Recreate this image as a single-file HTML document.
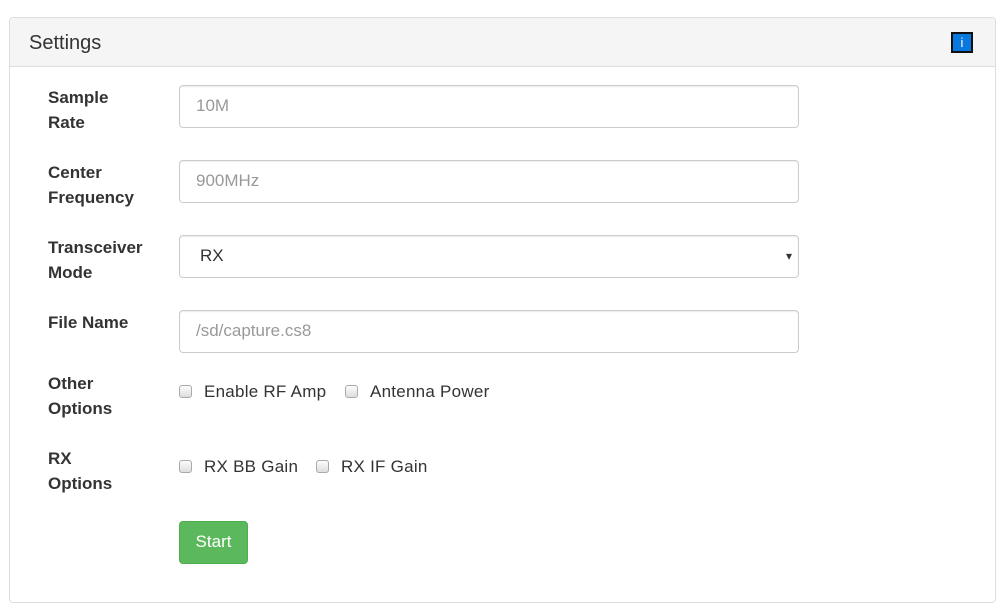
<!DOCTYPE html>
<html><head><meta charset="utf-8"><style>
*{box-sizing:border-box}
body{margin:0;width:1001px;height:615px;background:#fff;font-family:"Liberation Sans",Arial,sans-serif;color:#333;position:relative;overflow:hidden}
.panel{position:absolute;left:9px;top:17px;width:987px;height:586px;border:1px solid #ddd;border-radius:4px}
.head{height:49px;background:#f5f5f5;border-bottom:1px solid #ddd;border-radius:4px 4px 0 0;position:relative}
.head span{position:absolute;left:19px;top:14px;font-size:20px;color:#333}
.info{position:absolute;left:941px;top:14px;width:22px;height:21px;background:#0a79df;border:2px solid #111;color:#fff;font-size:13px;text-align:center;line-height:17px}
.lbl{position:absolute;left:48px;font-weight:bold;font-size:17px;line-height:25px;color:#333}
.in{position:absolute;left:179px;width:620px;height:43px;border:1px solid #ccc;border-radius:4px;font-size:17px;color:#999;padding:10px 0 0 16px;box-shadow:inset 0 1px 1px rgba(0,0,0,.075)}
.sel{color:#333;padding-left:20px}
.arr{position:absolute;right:6px;top:13px;font-size:12px;color:#333}
.cb{position:absolute;width:13px;height:13px;border:1px solid #aaa;border-radius:3px;background:linear-gradient(#fcfcfc,#ddd)}
.ct{position:absolute;font-size:17px;color:#333;letter-spacing:.25px}
.btn{position:absolute;left:179px;top:521px;width:69px;height:43px;background:#5cb85c;border:1px solid #4cae4c;border-radius:4px;color:#fff;font-size:17px;text-align:center;line-height:40px}
</style></head><body>
<div class="panel"><div class="head"><span>Settings</span><div class="info">i</div></div></div>
<div class="lbl" style="top:85px">Sample<br>Rate</div>
<div class="in" style="top:85px">10M</div>
<div class="lbl" style="top:160px">Center<br>Frequency</div>
<div class="in" style="top:160px">900MHz</div>
<div class="lbl" style="top:235px">Transceiver<br>Mode</div>
<div class="in sel" style="top:235px">RX<span class="arr">▾</span></div>
<div class="lbl" style="top:310px">File Name</div>
<div class="in" style="top:310px">/sd/capture.cs8</div>
<div class="lbl" style="top:371px">Other<br>Options</div>
<div class="cb" style="left:179px;top:385px"></div><div class="ct" style="left:204px;top:382px">Enable RF Amp</div>
<div class="cb" style="left:345px;top:385px"></div><div class="ct" style="left:370px;top:382px">Antenna Power</div>
<div class="lbl" style="top:446px">RX<br>Options</div>
<div class="cb" style="left:179px;top:460px"></div><div class="ct" style="left:204px;top:457px">RX BB Gain</div>
<div class="cb" style="left:316px;top:460px"></div><div class="ct" style="left:341px;top:457px">RX IF Gain</div>
<div class="btn">Start</div>
</body></html>
